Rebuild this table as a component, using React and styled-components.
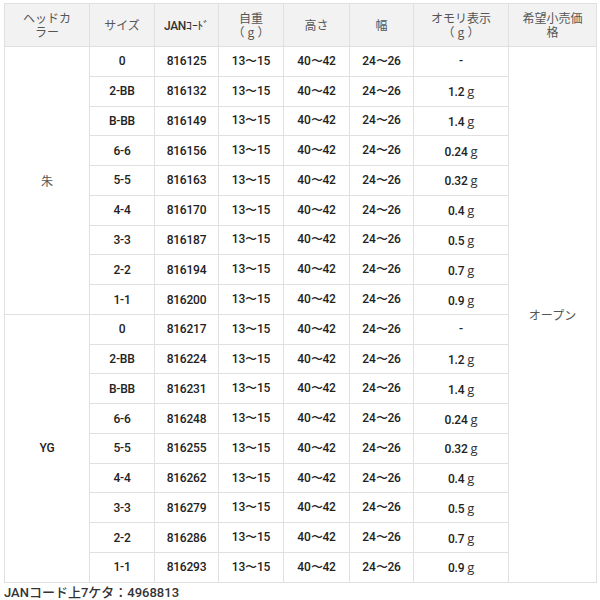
import React from 'react';
import styled, { createGlobalStyle } from 'styled-components';

const GlobalStyle = createGlobalStyle`
    body {
        margin: 0;
        background: #fff;
        font-family: "Roboto", "Noto Sans CJK JP", sans-serif;
    }
`;

const Page = styled.div`
    padding: 3px 4px 0 4px;
    width: 592px;
`;

const Table = styled.table`
    width: 592px;
    border-collapse: collapse;
    table-layout: fixed;
`;

const Th = styled.th`
    background: #f2f2f2;
    border: 1px solid #e0e0e0;
    height: 42px;
    padding: 0;
    font-family: "Noto Sans CJK JP", sans-serif;
    font-weight: 400;
    font-size: 12px;
    line-height: 14px;
    color: #555;
    text-align: center;
    vertical-align: middle;
`;

// unit line under the header label, e.g. （g）
const Unit = styled.span`
    display: inline-block;
    letter-spacing: 3px;
    margin-right: -3px;
`;

const Code = styled.span`
    font-family: "Roboto", sans-serif;
    font-weight: 500;
    color: #333;
    letter-spacing: -0.3px;
`;

const Td = styled.td`
    border: 1px solid #e0e0e0;
    height: 28.78px;
    padding: 0;
    text-align: center;
    vertical-align: middle;
    font-size: 12px;
    font-weight: ${p => (p.$jp ? 400 : 500)};
    font-family: ${p => (p.$jp ? '"Noto Sans CJK JP", sans-serif' : '"Roboto", sans-serif')};
    color: ${p => (p.$jp ? '#555' : '#222')};
    letter-spacing: ${p => (p.$jp ? '0' : '-0.2px')};
`;

const Gram = styled.span`
    font-family: "Open Sans", sans-serif;
    font-weight: 400;
    font-size: 13px;
    color: #333;
    margin-left: 3px;
`;

const Note = styled.p`
    margin: 2px 0 0 0;
    font-size: 13px;
    line-height: 16px;
    font-weight: 500;
    color: #333;
    font-family: "Roboto", "Noto Sans CJK JP", sans-serif;
`;

const sizes = [
    ['0', '-'],
    ['2-BB', '1.2'],
    ['B-BB', '1.4'],
    ['6-6', '0.24'],
    ['5-5', '0.32'],
    ['4-4', '0.4'],
    ['3-3', '0.5'],
    ['2-2', '0.7'],
    ['1-1', '0.9'],
];

const groups = [
    { color: '朱', jan: ['816125', '816132', '816149', '816156', '816163', '816170', '816187', '816194', '816200'] },
    { color: 'YG', jan: ['816217', '816224', '816231', '816248', '816255', '816262', '816279', '816286', '816293'] },
];

const widths = [85, 65, 64, 65, 66, 64, 95, 88];

function Weight({ value }) {
    if (value === '-') return <>-</>;
    return <>{value}<Gram>g</Gram></>;
}

export default function App() {
    return (
        <Page>
            <GlobalStyle />
            <Table>
                <colgroup>
                    {widths.map((w, i) => <col key={i} style={{ width: w }} />)}
                </colgroup>
                <thead>
                    <tr>
                        <Th>ヘッドカ<br />ラー</Th>
                        <Th>サイズ</Th>
                        <Th><Code>JANｺｰﾄﾞ</Code></Th>
                        <Th>自重<br /><Unit>（g）</Unit></Th>
                        <Th>高さ</Th>
                        <Th>幅</Th>
                        <Th>オモリ表示<br /><Unit>（g）</Unit></Th>
                        <Th>希望小売価<br />格</Th>
                    </tr>
                </thead>
                <tbody>
                    {groups.map((g, gi) =>
                        sizes.map(([size, weight], i) => (
                            <tr key={`${gi}-${i}`}>
                                {i === 0 && (
                                    <Td rowSpan={9} $jp={g.color === '朱'}>{g.color}</Td>
                                )}
                                <Td>{size}</Td>
                                <Td>{g.jan[i]}</Td>
                                <Td>13〜15</Td>
                                <Td>40〜42</Td>
                                <Td>24〜26</Td>
                                <Td><Weight value={weight} /></Td>
                                {gi === 0 && i === 0 && (
                                    <Td rowSpan={18} $jp>オープン</Td>
                                )}
                            </tr>
                        ))
                    )}
                </tbody>
            </Table>
            <Note>JANコード上7ケタ：4968813</Note>
        </Page>
    );
}
